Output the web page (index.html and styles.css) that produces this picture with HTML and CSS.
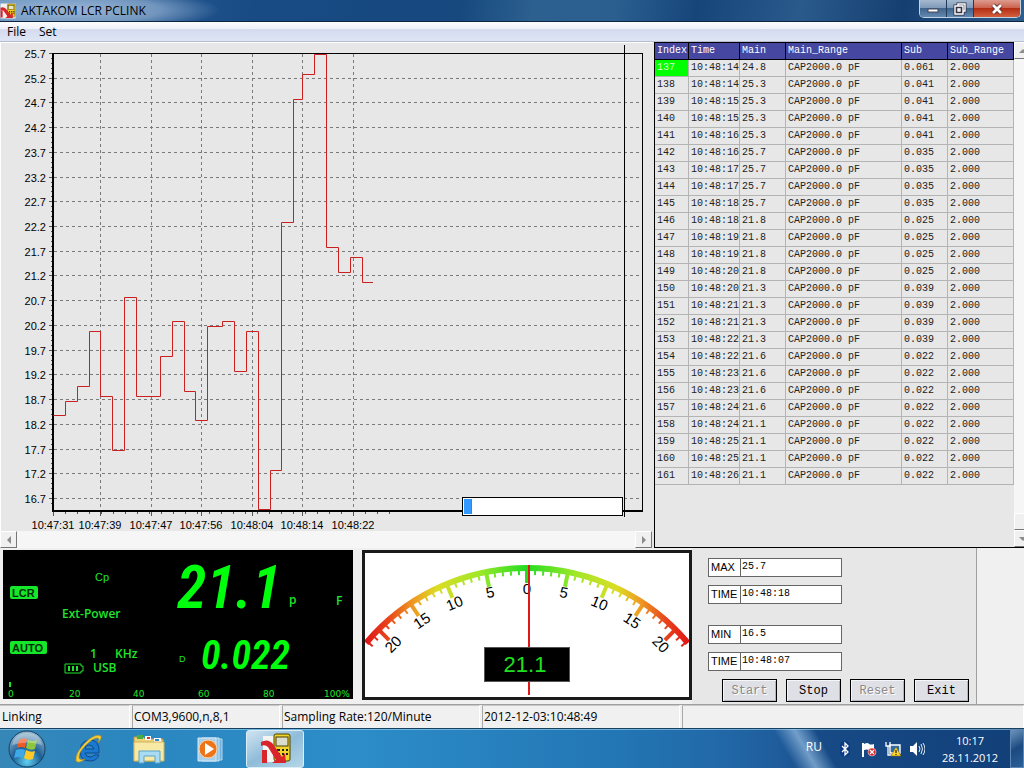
FILE: index.html
```html
<!DOCTYPE html>
<html lang="en">
<head>
    <meta charset="utf-8">
    <title>AKTAKOM LCR PCLINK</title>
    <link rel="stylesheet" href="styles.css">
</head>
<body>
    <header class="titlebar">
        <svg class="app-icon" viewBox="0 0 30 28">
            <rect x="1" y="0" width="28" height="28" fill="#f4f0ec"/>
            <rect x="14" y="1" width="14" height="24" rx="2" fill="#f3d21c" stroke="#5b4a00"/>
            <rect x="16" y="4" width="10" height="7" fill="#e6e6d0" stroke="#5b4a00"/>
            <path d="M17 15h2m2 0h2m2 0h2M17 18h2m2 0h2m2 0h2" stroke="#222" stroke-width="2"/>
            <path d="M1 26V14h4v12zM1 8q6-3 10 2l9 11 4-4v10H10l4-3-8-11-5 1z" fill="#d8242a"/>
        </svg>
        <h1 class="title">AKTAKOM LCR PCLINK</h1>
        <div class="window-buttons">
            <button type="button" aria-label="Minimize"><svg viewBox="0 0 16 14"><rect x="3" y="7" width="10" height="3" fill="#fff" stroke="#445" stroke-width="1"/></svg></button>
            <button type="button" aria-label="Restore"><svg viewBox="0 0 16 14"><path d="M6 4V2h7v7h-2M3 4h8v8H3zM6 7h2v2H6z" fill="none" stroke="#334" stroke-width="3"/><path d="M6 4V2h7v7h-2M3 4h8v8H3zM6 7h2v2H6z" fill="none" stroke="#fff" stroke-width="1.4"/></svg></button>
            <button type="button" class="close" aria-label="Close"><svg viewBox="0 0 16 14"><path d="M4 3l8 8M12 3l-8 8" stroke="#522" stroke-width="4.5"/><path d="M4 3l8 8M12 3l-8 8" stroke="#fff" stroke-width="2.8"/></svg></button>
        </div>
    </header>

    <nav class="menu">
        <button type="button">File</button>
        <button type="button">Set</button>
    </nav>

    <main class="workspace">
        <section class="trend">
            <div class="plot">
                <svg id="chart" viewBox="0 42 652 489"></svg>
                <progress class="level" value="5" max="100" aria-label="Buffer"></progress>
            </div>
            <div class="hscroll">
                <button type="button" aria-label="Scroll left"><svg viewBox="0 0 8 8"><path d="M6 0v8L2 4z"/></svg></button>
                <button type="button" aria-label="Scroll right"><svg viewBox="0 0 8 8"><path d="M2 0v8l4-4z"/></svg></button>
            </div>
        </section>
        <section class="log">
            <div class="log-body">
                <table>
                    <colgroup><col class="c-index"><col class="c-time"><col class="c-main"><col class="c-range"><col class="c-sub"><col></colgroup>
                    <thead>
                        <tr><th>Index</th><th>Time</th><th>Main</th><th>Main_Range</th><th>Sub</th><th>Sub_Range</th></tr>
                    </thead>
                    <tbody id="rows"></tbody>
                </table>
            </div>
            <div class="vscroll">
                <button type="button" aria-label="Scroll up"><svg viewBox="0 0 8 8"><path d="M0 6h8L4 2z"/></svg></button>
                <div class="track"></div>
                <div class="thumb"></div>
                <button type="button" aria-label="Scroll down"><svg viewBox="0 0 8 8"><path d="M0 2h8L4 6z"/></svg></button>
            </div>
        </section>
    </main>

    <section class="meters">
        <svg class="lcd" viewBox="0 0 350 149">
            <rect width="350" height="149" fill="#000"/>
            <rect class="badge" x="7" y="36" width="28" height="13" rx="2"/>
            <text class="badge-text" x="9" y="47">LCR</text>
            <rect class="badge" x="7" y="91" width="37" height="13" rx="2"/>
            <text class="badge-text" x="9" y="102">AUTO</text>
            <text class="lcd-small" x="92" y="31">Cp</text>
            <text class="lcd-label" x="59" y="68">Ext-Power</text>
            <text class="lcd-label" x="87" y="108">1</text>
            <text class="lcd-label" x="112" y="108">KHz</text>
            <text class="lcd-label" x="90" y="122">USB</text>
            <path class="battery" d="M62 114h16v2h2v5h-2v2H62z"/>
            <path class="cells" d="M66 116v5M70 116v5M74 116v5"/>
            <text class="lcd-main" x="174" y="58">21.1</text>
            <text class="lcd-label" x="286" y="54">p</text>
            <text class="lcd-label" x="333" y="55">F</text>
            <text class="lcd-tiny" x="176" y="112">D</text>
            <text class="lcd-sub" x="198" y="119">0.022</text>
            <rect class="badge" x="6" y="132" width="2" height="5"/>
            <g class="lcd-scale">
                <text x="5" y="147">0</text>
                <text x="66" y="147">20</text>
                <text x="130" y="147">40</text>
                <text x="195" y="147">60</text>
                <text x="260" y="147">80</text>
                <text x="321" y="147">100%</text>
            </g>
        </svg>

        <svg class="gauge" id="gauge" viewBox="365 553 324 144">
            <defs>
                <linearGradient id="heat" gradientUnits="userSpaceOnUse" x1="365" y1="0" x2="689" y2="0">
                    <stop offset="0" stop-color="#e01414"/>
                    <stop offset="0.07" stop-color="#e8431c"/>
                    <stop offset="0.15" stop-color="#ee9a22"/>
                    <stop offset="0.22" stop-color="#dcdc24"/>
                    <stop offset="0.35" stop-color="#a0e828"/>
                    <stop offset="0.5" stop-color="#22dc22"/>
                    <stop offset="0.65" stop-color="#a0e828"/>
                    <stop offset="0.78" stop-color="#dcdc24"/>
                    <stop offset="0.85" stop-color="#ee9a22"/>
                    <stop offset="0.93" stop-color="#e8431c"/>
                    <stop offset="1" stop-color="#e01414"/>
                </linearGradient>
            </defs>
        </svg>

        <form class="stats">
            <div class="stat"><label for="max">MAX</label><input id="max" type="text" value="25.7" readonly></div>
            <div class="stat"><label for="max-time">TIME</label><input id="max-time" type="text" value="10:48:18" readonly></div>
            <div class="stat stat-gap"><label for="min">MIN</label><input id="min" type="text" value="16.5" readonly></div>
            <div class="stat"><label for="min-time">TIME</label><input id="min-time" type="text" value="10:48:07" readonly></div>
            <div class="actions">
                <button type="button" disabled>Start</button>
                <button type="button">Stop</button>
                <button type="button" disabled>Reset</button>
                <button type="button">Exit</button>
            </div>
        </form>
    </section>

    <footer class="status">
        <span>Linking</span>
        <span>COM3,9600,n,8,1</span>
        <span>Sampling Rate:120/Minute</span>
        <span>2012-12-03:10:48:49</span>
        <span></span>
    </footer>

    <div class="taskbar">
        <button type="button" class="start" aria-label="Start menu">
            <svg viewBox="0 0 38 38">
                <defs>
                    <radialGradient id="orb" cx="0.5" cy="0.85" r="0.8">
                        <stop offset="0" stop-color="#5fd0f2"/>
                        <stop offset="0.5" stop-color="#1d5f96"/>
                        <stop offset="1" stop-color="#8fb4cc"/>
                    </radialGradient>
                </defs>
                <circle cx="19" cy="19" r="18" fill="url(#orb)" stroke="#16405f"/>
                <path d="M11 10q4-3 8-1l-2 9q-4-2-8 0z" fill="#ee5a24"/>
                <path d="M20 10q5 2 9 0l-2 9q-4 2-9-1z" fill="#8cc63f"/>
                <path d="M8 20q5-2 9 0l-2 8q-4-2-9 0z" fill="#3fa9e8"/>
                <path d="M18 20q5 3 9 1l-2 8q-5 2-9-1z" fill="#fcc929"/>
                <path d="M4 15Q7 3 19 3t15 12q-14-5-30 0z" fill="#fff" opacity="0.3"/>
            </svg>
        </button>
        <button type="button" class="task" aria-label="Internet Explorer">
            <svg viewBox="0 0 32 32">
                <path d="M27 20H13q1 4 5 4 3 0 4-2h5q-2 6-9 6-10 0-10-10T18 7q10 0 9 13zM13 16h9q-1-4-5-4t-4 4z" fill="#1b78d0" stroke="#0d4b91"/>
                <path d="M29 3q-6-3-16 7T4 28q3 3 9-2-5 2-6-1-1-5 7-13t12-7q2 1 0 5 4-5 3-7z" fill="#f6cd3a" stroke="#b98c12" stroke-width="0.6"/>
            </svg>
        </button>
        <button type="button" class="task" aria-label="Explorer">
            <svg viewBox="0 0 32 32">
                <path d="M1 4h9l2 2h18v22H1z" fill="#eed27b" stroke="#b79a45"/>
                <path d="M4 2h6v4H4z" fill="#4aae3f"/>
                <path d="M12 3h6v4h-6z" fill="#fff"/><path d="M14 4h3v2h-3z" fill="#d33"/>
                <path d="M21 5h7v4h-7z" fill="#fff"/><path d="M22 6h4v2h-4z" fill="#38c"/>
                <path d="M1 9h30v19H1z" fill="#f8e9a5" stroke="#d0b45c"/>
                <path d="M6 30V18h21v12h-5v-7H11v7z" fill="#a7dcf4" stroke="#5ba3c7"/>
            </svg>
        </button>
        <button type="button" class="task" aria-label="Media Player">
            <svg viewBox="0 0 32 32">
                <path d="M10 6h18v21H10z" fill="#6fb2dd" stroke="#b5d8ef"/>
                <path d="M8 5h17v23H8z" fill="#8cc0e4" stroke="#c9e3f4"/>
                <path d="M4 5h18v23H4z" fill="#a9cfea" stroke="#d5e9f6"/>
                <circle cx="14" cy="16" r="9" fill="#ee7418" stroke="#fbd2ab"/>
                <path d="M11 10v12l9-6z" fill="#fff"/>
            </svg>
        </button>
        <button type="button" class="task task-active" aria-label="AKTAKOM LCR PCLINK">
            <svg viewBox="0 0 32 32">
                <path d="M4 3h20v26H4z" fill="#f6f4f2"/>
                <rect x="15" y="1" width="16" height="27" rx="2" fill="#efd32b" stroke="#4d4000"/>
                <rect x="17" y="4" width="12" height="9" fill="#dcdccb" stroke="#4d4000"/>
                <path d="M18 17h3m2 0h2m2 0h2M18 21h3m2 0h2m2 0h2" stroke="#222" stroke-width="2"/>
                <path d="M3 30V17h5v13zM2 9q7-4 12 2l9 13 3-4 1 10H13l4-3-8-13q-3-3-7-1z" fill="#d8242a"/>
            </svg>
        </button>
        <div class="tray">
            <span class="lang">RU</span>
            <svg class="bt" viewBox="0 0 16 16"><rect x="3" y="0" width="10" height="16" rx="5" fill="#0a3a86"/><path d="M5 5l6 6-3 3V2l3 3-6 6" fill="none" stroke="#fff" stroke-width="1.3"/></svg>
            <svg viewBox="0 0 16 16"><path d="M1 2h2v14H1zM3 3q4-2 5 0 2 1 5 0v7q-4 1-5-1-2-1-5 0z" fill="#fff"/><circle cx="11" cy="11" r="4" fill="#d9262c" stroke="#fff" stroke-width="0.5"/><path d="M9 9l4 4M13 9l-4 4" stroke="#fff" stroke-width="1.3"/></svg>
            <svg viewBox="0 0 16 16"><path d="M5 4h10v8H5z" fill="#2c6ca4" stroke="#fff" stroke-width="1.4"/><path d="M1 1v4h4V1M3 5v9h5" fill="none" stroke="#fff" stroke-width="1.3"/><path d="M11 6l5 9H6z" fill="#ffd52b" stroke="#8f6b00" stroke-width="0.6"/><path d="M11 9v3M11 13v1" stroke="#222" stroke-width="1.2"/></svg>
            <svg viewBox="0 0 16 16"><path d="M1 5h3l4-4v14l-4-4H1z" fill="#fff"/><path d="M10 5q2 3 0 6M12 3q3 5 0 10M14 2q4 6 0 12" fill="none" stroke="#dfeaf5"/></svg>
            <div class="clock"><span>10:17</span><span>28.11.2012</span></div>
            <button type="button" class="peek" aria-label="Show desktop"></button>
        </div>
    </div>
    <script src="script.js"></script>
</body>
</html>
```
FILE: styles.css
```css
* {
    box-sizing: border-box;
}
body {
    margin: 0;
    min-height: 100vh;
    display: flex;
    flex-direction: column;
    background: #f0f0f0;
    color: #000;
    font-family: "Open Sans", "Liberation Sans", sans-serif;
    font-size: 12px;
}
button {
    font: inherit;
    color: inherit;
    padding: 0;
    margin: 0;
    border: none;
    background: none;
}
svg {
    display: block;
}

/* title bar and menu */
.titlebar {
    height: 22px;
    display: flex;
    align-items: center;
    background:
        radial-gradient(ellipse 150px 22px at 70px 10px, rgba(190, 212, 236, 0.75), rgba(190, 212, 236, 0.5) 60%, transparent),
        linear-gradient(100deg, #34679f 0, #184a84 25%, #17497f 45%, #2c608f 52%, #2b5f90 60%, #16457a 68%, #2a5a8c 78%, #153f70 88%, #2d5d8c 100%);
    border-bottom: 1px solid #0d2440;
}
.app-icon {
    width: 16px;
    height: 16px;
}
.title {
    flex: 1;
    margin: 0 0 0 5px;
    font-size: 12px;
    font-weight: normal;
}
.window-buttons {
    align-self: flex-start;
    display: flex;
    height: 18px;
    margin-right: 3px;
    border: 1px solid #c3d2e2;
    border-top: none;
    border-radius: 0 0 5px 5px;
    overflow: hidden;
}
.window-buttons button {
    width: 27px;
    display: flex;
    align-items: center;
    justify-content: center;
    background: linear-gradient(#a5b9cf, #7f9ab8 45%, #40648c 50%, #6289b1);
    border-right: 1px solid #1f3a5a;
}
.window-buttons svg {
    width: 16px;
    height: 14px;
}
.window-buttons .close {
    width: 46px;
    border-right: none;
    background: linear-gradient(#dd9c8f, #cc6450 45%, #b42e14 50%, #d2603f);
}
.menu {
    height: 20px;
    display: flex;
    align-items: center;
    gap: 13px;
    padding-left: 7px;
    background: linear-gradient(#fbfcfe 0, #eef1f9 35%, #d5dbee 40%, #dde4f4 90%);
    border-bottom: 1px solid #b6bccc;
}

/* chart and log table */
.workspace {
    flex: 1;
    display: grid;
    grid-template-columns: minmax(0, 1fr) 370px;
    background: #e7e7e7;
}
.trend {
    display: flex;
    flex-direction: column;
    margin-right: 2px;
}
.plot {
    flex: 1;
    position: relative;
    box-shadow: inset 1px 1px #fff;
}
#chart {
    width: 100%;
    height: 100%;
}
.grid {
    stroke: #7a7a7a;
    stroke-dasharray: 3 3;
    shape-rendering: crispEdges;
}
.tick {
    stroke: #555;
}
.frame {
    stroke: #000;
}
.axis {
    stroke: #000;
    stroke-width: 2;
}
.trace {
    fill: none;
    stroke: #cc1f1f;
}
.scale {
    font-family: "Liberation Sans", Arial, sans-serif;
    font-size: 11px;
}
.level {
    appearance: none;
    position: absolute;
    right: 29px;
    bottom: 15px;
    width: 161px;
    height: 19px;
    padding: 1px;
    border: 1px solid #000;
    background: #fff;
}
.level::-webkit-progress-bar {
    background: #fff;
}
.level::-webkit-progress-value {
    background: #3399ff;
    border-right: 1px solid #777;
}
.hscroll {
    height: 17px;
    display: flex;
    justify-content: space-between;
    background: #f6f6f6;
}
.hscroll button,
.vscroll button,
.thumb {
    width: 17px;
    height: 17px;
    display: flex;
    align-items: center;
    justify-content: center;
    background: #f0f0f0;
    border: 1px solid #fff;
    border-right-color: #777;
    border-bottom-color: #777;
}
.hscroll svg,
.vscroll svg {
    width: 8px;
    height: 8px;
    fill: #8c8c8c;
}
.log {
    display: flex;
    border-left: 1px solid #000;
    border-bottom: 1px solid #000;
    overflow: hidden;
}
.log-body {
    width: 359px;
}
.log table {
    width: 359px;
    table-layout: fixed;
    border-collapse: separate;
    border-spacing: 0;
    font-family: "Liberation Mono", "Courier New", monospace;
    font-size: 10px;
    line-height: 16px;
}
.c-index {
    width: 34px;
}
.c-time {
    width: 51px;
}
.c-main,
.c-sub {
    width: 46px;
}
.c-range {
    width: 116px;
}
.log th,
.log td {
    height: 17px;
    padding: 0 0 0 2px;
    text-align: left;
    font-weight: normal;
    white-space: nowrap;
    border-right: 1px solid #b4b4b4;
    border-bottom: 1px solid #b4b4b4;
}
.log td {
    color: #222;
}
.log th {
    height: 18px;
    color: #fff;
    background: #4547a0;
    border-color: #000;
    border-top: 1px solid #000;
}
.log .current {
    color: #d8ffd8;
    background: #00ff00;
}
.vscroll {
    width: 17px;
    flex: none;
    display: flex;
    flex-direction: column;
}
.track {
    flex: 1;
    background: #f6f6f6;
}

/* instrument panel */
.meters {
    height: 157px;
    display: flex;
    align-items: flex-start;
    padding: 0 0 0 3px;
    background: #f0f0f0;
    border-bottom: 1px solid #a0a0a0;
}
.lcd {
    width: 350px;
    height: 149px;
    margin-top: 2px;
}
.lcd text {
    fill: #1fe52c;
}
.badge {
    fill: #14e828;
}
.lcd .badge-text {
    font: bold 11px "Liberation Sans", sans-serif;
    fill: #032c06;
}
.lcd-label {
    font: 600 12px "Open Sans", sans-serif;
}
.lcd-small {
    font: 11px "Liberation Sans", sans-serif;
}
.lcd-tiny {
    font: 9px "Liberation Sans", sans-serif;
}
.lcd-scale {
    font: 9px "DejaVu Sans", sans-serif;
}
.lcd .lcd-main,
.lcd .lcd-sub {
    font: italic 600 60px "Roboto Condensed", "Open Sans Condensed", "Open Sans", sans-serif;
    fill: #00ff0c;
}
.lcd .lcd-sub {
    font-size: 40px;
}
.battery {
    fill: none;
    stroke: #1fe52c;
}
.cells {
    stroke: #1fe52c;
    stroke-width: 2;
}
.gauge {
    width: 330px;
    height: 150px;
    margin: 2px 0 0 9px;
    background: #fff;
    border: 3px solid #1a1a1a;
}
.arc {
    fill: none;
    stroke: url(#heat);
    stroke-width: 6;
}
.gauge-tick {
    fill: none;
    stroke: url(#heat);
    stroke-width: 2;
}
.gauge-major {
    fill: none;
    stroke: url(#heat);
    stroke-width: 4;
}
.gauge-label {
    font: 15px "Liberation Sans", Arial, sans-serif;
    text-anchor: middle;
}
.needle {
    stroke: #e01818;
    stroke-width: 2;
}
.readout {
    stroke: #555;
}
.readout-text {
    font: 22px "Liberation Sans", Arial, sans-serif;
    fill: #1fe01f;
    text-anchor: middle;
}
.stats {
    flex: none;
    width: 285px;
    height: 156px;
    padding: 10px 0 0 16px;
    background: #e7e7e7;
    border-right: 1px solid #a0a0a0;
}
.stat {
    display: flex;
    width: 134px;
    height: 19px;
    margin-bottom: 8px;
    border: 1px solid #666;
    background: #fff;
}
.stat-gap {
    margin-top: 21px;
}
.stat label {
    width: 32px;
    padding-left: 2px;
    border-right: 1px solid #666;
    font: 11px/17px "Liberation Sans", Arial, sans-serif;
}
.stat input {
    flex: 1;
    min-width: 0;
    padding: 0 0 3px 1px;
    border: none;
    outline: none;
    background: transparent;
    font: 10px "Liberation Mono", monospace;
}
.actions {
    display: flex;
    gap: 9px;
    padding-left: 14px;
}
.actions button {
    width: 55px;
    height: 23px;
    border: 1px solid #000;
    background: #dfdfe6;
    box-shadow: inset 1px 1px #f5f5fa, inset -1px -1px #b5b5c0;
    font: 12px "Liberation Mono", monospace;
}
.actions button:disabled {
    color: #8a8a8a;
    text-shadow: 1px 1px #fff;
}

/* status bar */
.status {
    height: 24px;
    display: grid;
    grid-template-columns: 130px 148px 198px 198px 1fr;
    gap: 2px;
    padding-bottom: 2px;
    border-bottom: 1px solid #18405f;
}
.status span {
    padding-left: 1px;
    line-height: 22px;
    border-left: 1px solid #a8a8a8;
    border-top: 1px solid #c8c8c8;
    border-right: 1px solid #fff;
}
.status span:first-child {
    border-left: none;
    padding-left: 2px;
}

/* taskbar */
.taskbar {
    height: 39px;
    display: flex;
    align-items: center;
    background:
        linear-gradient(60deg, transparent 76%, rgba(150, 190, 225, 0.7) 78%, transparent 80%),
        linear-gradient(90deg, #3687b8 0, #2b86bf 12%, #2c8dc8 35%, #2376b4 60%, #2269a9 70%, #1f5c9c 76%, #174a86 80%, #123f78 100%);
    box-shadow: inset 0 1px rgba(160, 215, 245, 0.6);
    color: #fff;
}
.start {
    margin-left: 8px;
    margin-right: 20px;
}
.start svg {
    width: 38px;
    height: 38px;
}
.task {
    width: 58px;
    height: 38px;
    margin-right: 3px;
    display: flex;
    align-items: center;
    justify-content: center;
    border-radius: 3px;
}
.start + .task {
    margin-left: -7px;
}
.task svg {
    width: 32px;
    height: 32px;
}
.task-active {
    margin-left: 4px;
    border: 1px solid #dcedf7;
    background: linear-gradient(150deg, #cfe4f1, #8fbcd9 50%, #b4d6e8);
}
.tray {
    margin-left: auto;
    height: 100%;
    display: flex;
    align-items: center;
    gap: 8px;
}
.tray svg {
    width: 16px;
    height: 16px;
}
.lang {
    margin: 0 7px 5px 0;
}
.clock {
    display: flex;
    flex-direction: column;
    align-items: center;
    line-height: 17px;
    margin: 1px 4px 0 9px;
    font-size: 11px;
}
.peek {
    width: 14px;
    height: 100%;
    border: 1px solid #5d86b3;
    background: linear-gradient(150deg, #6e94bd, #1b4a80 50%, #2c5f98);
}
```
FILE: script.js
```js
var SVG = 'http://www.w3.org/2000/svg';

function add(parent, tag, attrs, text) {
    var el = document.createElementNS(SVG, tag);
    for (var key in attrs) {
        el.setAttribute(key, attrs[key]);
    }
    if (text !== undefined) {
        el.textContent = text;
    }
    parent.appendChild(el);
    return el;
}

function line(parent, cls, x1, y1, x2, y2) {
    add(parent, 'line', { 'class': cls, x1: x1, y1: y1, x2: x2, y2: y2 });
}

// trend chart: [x where the step starts, value]
var samples = [
    [53, 18.4], [65, 18.7], [77, 19.0], [89, 20.1], [100, 18.8], [112, 17.7],
    [124, 20.8], [136, 18.8], [160, 19.6], [172, 20.3], [184, 18.9], [195, 18.3],
    [207, 20.2], [222, 20.3], [234, 19.3], [246, 20.1], [258, 16.5], [270, 17.3],
    [281, 22.3], [293, 24.8], [302, 25.3], [314, 25.7], [326, 21.8], [338, 21.3],
    [350, 21.6], [362, 21.1]
];
var times = [
    [53, '10:47:31'], [100, '10:47:39'], [151, '10:47:47'], [201, '10:47:56'],
    [252, '10:48:04'], [302, '10:48:14'], [353, '10:48:22']
];

function drawChart() {
    var chart = document.getElementById('chart');
    var i, y;
    for (i = 0; i < 19; i++) {
        y = Math.round(53 + i * 24.72) + 0.5;
        if (i > 0) {
            line(chart, 'grid', 54, y, 642, y);
        }
        line(chart, 'tick', 49, y, 53, y);
        add(chart, 'text', { 'class': 'scale', x: 46, y: y + 4, 'text-anchor': 'end' }, (25.7 - i * 0.5).toFixed(1));
    }
    for (i = 0; i < 92; i++) {
        y = Math.round(53 + i * 4.944) + 0.5;
        line(chart, 'tick', 51, y, 53, y);
    }
    times.forEach(function(t, n) {
        if (n > 0) {
            line(chart, 'grid', t[0] + 0.5, 54, t[0] + 0.5, 510);
        }
        line(chart, 'tick', t[0] + 0.5, 512, t[0] + 0.5, 516);
        add(chart, 'text', { 'class': 'scale', x: t[0], y: 529, 'text-anchor': 'middle' }, t[1]);
    });
    for (i = 1; i < 29; i++) {
        y = Math.round(53 + i * 12) + 0.5;
        line(chart, 'tick', y, 512, y, 514);
    }
    line(chart, 'frame', 52, 53.5, 643, 53.5);
    line(chart, 'frame', 642.5, 53, 642.5, 512);
    line(chart, 'frame', 624.5, 45, 624.5, 517);
    line(chart, 'axis', 53, 53, 53, 512);
    line(chart, 'axis', 52, 511, 643, 511);

    var d = '';
    samples.forEach(function(s, n) {
        var x = s[0] + 0.5;
        var v = Math.round(54 + (25.7 - s[1]) * 49.5) + 0.5;
        d += (n ? 'H' + x + 'V' + v : 'M' + x + ' ' + v);
    });
    add(chart, 'path', { 'class': 'trace', d: d + 'H373' });
}

// log rows: time, main, sub
var log = [
    ['14', '24.8', '0.061'], ['14', '25.3', '0.041'], ['15', '25.3', '0.041'],
    ['15', '25.3', '0.041'], ['16', '25.3', '0.041'], ['16', '25.7', '0.035'],
    ['17', '25.7', '0.035'], ['17', '25.7', '0.035'], ['18', '25.7', '0.035'],
    ['18', '21.8', '0.025'], ['19', '21.8', '0.025'], ['19', '21.8', '0.025'],
    ['20', '21.8', '0.025'], ['20', '21.3', '0.039'], ['21', '21.3', '0.039'],
    ['21', '21.3', '0.039'], ['22', '21.3', '0.039'], ['22', '21.6', '0.022'],
    ['23', '21.6', '0.022'], ['23', '21.6', '0.022'], ['24', '21.6', '0.022'],
    ['24', '21.1', '0.022'], ['25', '21.1', '0.022'], ['25', '21.1', '0.022'],
    ['26', '21.1', '0.022']
];

function fillLog() {
    var body = document.getElementById('rows');
    log.forEach(function(r, n) {
        var row = body.insertRow();
        [137 + n, '10:48:' + r[0], r[1], 'CAP2000.0 pF', r[2], '2.000'].forEach(function(value) {
            row.insertCell().textContent = value;
        });
        if (n === 0) {
            row.cells[0].className = 'current';
        }
    });
}

// analog gauge
var cx = 527, cy = 778, step = 2.25;

function polar(r, deg) {
    var a = deg * Math.PI / 180;
    return [(cx + r * Math.sin(a)).toFixed(2), (cy - r * Math.cos(a)).toFixed(2)];
}

function drawGauge() {
    var gauge = document.getElementById('gauge');
    var from = polar(210, -50), to = polar(210, 50);
    for (var u = -22; u <= 22; u++) {
        var major = u % 5 === 0;
        var a = polar(209, u * step), b = polar(major ? 195 : 203, u * step);
        add(gauge, 'path', { 'class': major ? 'gauge-major' : 'gauge-tick', d: 'M' + a + 'L' + b });
        if (major) {
            var p = polar(184, u * step);
            add(gauge, 'text', {
                'class': 'gauge-label', x: p[0], y: p[1],
                transform: 'rotate(' + u * step + ' ' + p + ')'
            }, Math.abs(u));
        }
    }
    add(gauge, 'path', { 'class': 'arc', d: 'M' + from + 'A210 210 0 0 1 ' + to });
    line(gauge, 'needle', 529, 565, 529, 695);
    add(gauge, 'rect', { 'class': 'readout', x: 484.5, y: 647.5, width: 85, height: 34 });
    add(gauge, 'text', { 'class': 'readout-text', x: 525, y: 672 }, '21.1');
}

drawChart();
fillLog();
drawGauge();
```
